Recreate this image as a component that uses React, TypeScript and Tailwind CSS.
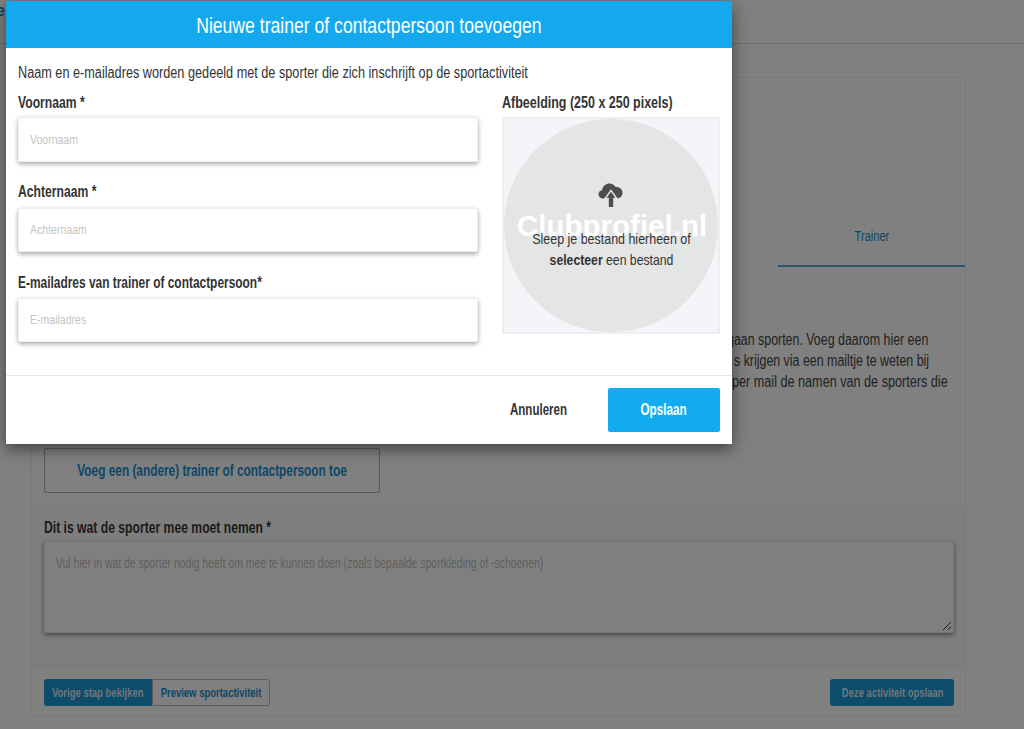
function Field({ label, labelScale, placeholder, mt, h, labelH }: { label: string; labelScale: string; placeholder: string; mt: string; h: string; labelH: string }) {
  return (
    <div className={mt}>
      <div className={`${labelH} origin-left whitespace-nowrap text-[16px] font-bold leading-[24px] text-[#333] ${labelScale}`}>{label}</div>
      <div className={`${h} flex items-center rounded-[2px] border border-[#eeeeee] bg-white pl-[11px] text-[13px] text-[#c4c4c4] shadow-[0_2px_5px_rgba(0,0,0,0.35)]`}>
        <span className="origin-left scale-x-[0.81] whitespace-nowrap">{placeholder}</span>
      </div>
    </div>
  );
}

function CloudIcon() {
  return (
    <svg width="26" height="25" viewBox="0 0 26 25" className="block">
      <path
        fill="#4d4d4d"
        d="M5 15.5C2.5 15.5.5 13.8.5 11.3c0-2.2 1.5-3.7 3.4-4.1C4.8 3 8 .5 11.5.5c2.7 0 4.8 1.3 6 3.5 3.5-.6 7 1.8 7 5.7 0 3.3-2.5 5.8-5.8 5.8z"
      />
      <path fill="#4d4d4d" stroke="#e4e5e5" strokeWidth="1.5" strokeLinejoin="miter" d="M13 7.5L7.2 15.4h11.6z" />
      <path fill="#4d4d4d" d="M10.8 14h4.4v10h-4.4z" />
    </svg>
  );
}

export default function App() {
  return (
    <div className="relative h-[729px] w-[1024px] overflow-hidden bg-[#808080] font-['Liberation_Sans',sans-serif]">
      {/* page behind the dialog */}
      <div className="h-[44px] border-b border-[#6e6e6e] pt-[1px] text-[16px] font-bold leading-[20px] text-[#0d4768]">
        <span className="ml-[-4px]">el</span>
      </div>
      <div className="ml-[31px] mt-[33px] h-[640px] w-[935px] border border-[#797979]">
        <div className="flex h-[190px] justify-end">
          <div className="mt-[122px] flex h-[67px] w-[187px] items-center justify-center border-b-2 border-[#2f5568] pt-[7px] text-[14px] text-[#0d4662]">
            <span className="scale-x-[0.79]">Trainer</span>
          </div>
        </div>
        <div className="mt-[61px] whitespace-nowrap text-[16px] leading-[21px] text-[#1f1f1f]">
          <div className="ml-[695px] origin-left scale-x-[0.775]">gaan sporten. Voeg daarom hier een</div>
          <div className="ml-[702px] origin-left scale-x-[0.775]">s krijgen via een mailtje te weten bij</div>
          <div className="ml-[700px] origin-left scale-x-[0.79]">per mail de namen van de sporters die</div>
        </div>
        <div className="ml-[12px] mt-[56px] flex h-[45px] w-[336px] items-center justify-center rounded-[2px] border border-[#5a5a5a] text-[16px] font-bold text-[#0d4768]">
          <span className="scale-x-[0.74] whitespace-nowrap">Voeg een (andere) trainer of contactpersoon toe</span>
        </div>
        <div className="mt-[13px] h-[160px] bg-[#7e7e7e] pl-[12px] pr-[11px] pt-[9px]">
          <div className="h-[26px] origin-left scale-x-[0.76] whitespace-nowrap text-[16px] font-bold leading-[26px] text-[#1a1a1a]">
            Dit is wat de sporter mee moet nemen *
          </div>
          <div className="relative h-[92px] rounded-[2px] border border-[#777] bg-[#7f7f7f] pl-[11px] pt-[11px] text-[14px] text-[#606060] shadow-[0_2px_5px_rgba(0,0,0,0.45)]">
            <div className="origin-left scale-x-[0.745] whitespace-nowrap">
              Vul hier in wat de sporter nodig heeft om mee te kunnen doen (zoals bepaalde sportkleding of -schoenen)
            </div>
            <svg width="10" height="10" viewBox="0 0 10 10" className="absolute bottom-[1px] right-[1px]">
              <path d="M1 9l8-8M5.5 9L9 5.5" stroke="#1a1a1a" strokeWidth="1" />
            </svg>
          </div>
        </div>
        <div className="flex items-center justify-between border-t border-[#797979] pl-[12px] pr-[11px] pt-[12px]">
          <div className="flex">
            <div className="flex h-[27px] w-[108px] items-center justify-center rounded-l-[3px] bg-[#0d4d6b] text-[13px] font-bold text-[#6f777b]">
              <span className="scale-x-[0.73] whitespace-nowrap">Vorige stap bekijken</span>
            </div>
            <div className="flex h-[27px] w-[118px] items-center justify-center rounded-r-[3px] border border-[#5e5e5e] text-[13px] font-bold text-[#0d4768]">
              <span className="scale-x-[0.73] whitespace-nowrap">Preview sportactiviteit</span>
            </div>
          </div>
          <div className="flex h-[27px] w-[124px] items-center justify-center rounded-[3px] bg-[#0d4d6b] pl-[2px] text-[13px] font-bold text-[#6f777b]">
            <span className="scale-x-[0.73] whitespace-nowrap">Deze activiteit opslaan</span>
          </div>
        </div>
      </div>

      {/* dialog */}
      <div className="absolute left-[6px] top-[1px] h-[443px] w-[726px] bg-white shadow-[0_5px_15px_rgba(0,0,0,0.5)]">
        <div className="flex h-[47px] items-center justify-center bg-[#14a9ef] pt-[2px] text-[22px] text-white">
          <span className="scale-x-[0.8] whitespace-nowrap">Nieuwe trainer of contactpersoon toevoegen</span>
        </div>
        <div className="ml-[12px] origin-left scale-x-[0.793] whitespace-nowrap pt-[15px] text-[16px] leading-[20px] text-[#333]">
          Naam en e-mailadres worden gedeeld met de sporter die zich inschrijft op de sportactiviteit
        </div>
        <div className="flex gap-[24px] px-[12px] pt-[8px]">
          <div className="w-[460px]">
            <Field label="Voornaam *" labelScale="scale-x-[0.76]" labelH="h-[26px]" placeholder="Voornaam" mt="" h="h-[45px]" />
            <Field label="Achternaam *" labelScale="scale-x-[0.76]" labelH="h-[28px]" placeholder="Achternaam" mt="mt-[18px]" h="h-[44px]" />
            <Field label="E-mailadres van trainer of contactpersoon*" labelScale="scale-x-[0.745]" labelH="h-[27px]" placeholder="E-mailadres" mt="mt-[19px]" h="h-[44px]" />
          </div>
          <div className="w-[218px]">
            <div className="h-[26px] origin-left scale-x-[0.78] whitespace-nowrap text-[16px] font-bold leading-[24px] text-[#333]">
              Afbeelding (250 x 250 pixels)
            </div>
            <div className="relative h-[217px] border-2 border-[#eceef2] bg-[#f4f5f9]">
              <div className="flex h-[213px] w-[214px] flex-col items-center rounded-full bg-[#e4e5e5] pt-[64px]">
                <CloudIcon />
                <div className="relative z-10 mt-[20px] whitespace-nowrap text-center text-[15px] leading-[21px] text-[#333]">
                  <div className="scale-x-[0.83]">Sleep je bestand hierheen of</div>
                  <div className="scale-x-[0.815]">
                    <b>selecteer</b> een bestand
                  </div>
                </div>
              </div>
              <div className="absolute left-[13px] top-[90px] text-[29.5px] font-bold leading-[34px] text-white">Clubprofiel.nl</div>
            </div>
          </div>
        </div>
        <div className="absolute inset-x-0 bottom-0 flex h-[69px] items-center justify-end border-t border-[#e6e6e6] pr-[12px]">
          <div className="mr-[41px] w-[57px] text-[16px] font-bold text-[#333]">
            <span className="inline-block origin-left scale-x-[0.72] whitespace-nowrap">Annuleren</span>
          </div>
          <div className="flex h-[44px] w-[112px] items-center justify-center rounded-[2px] bg-[#12abf0] text-[16px] font-bold text-white">
            <span className="scale-x-[0.73]">Opslaan</span>
          </div>
        </div>
      </div>
    </div>
  );
}
